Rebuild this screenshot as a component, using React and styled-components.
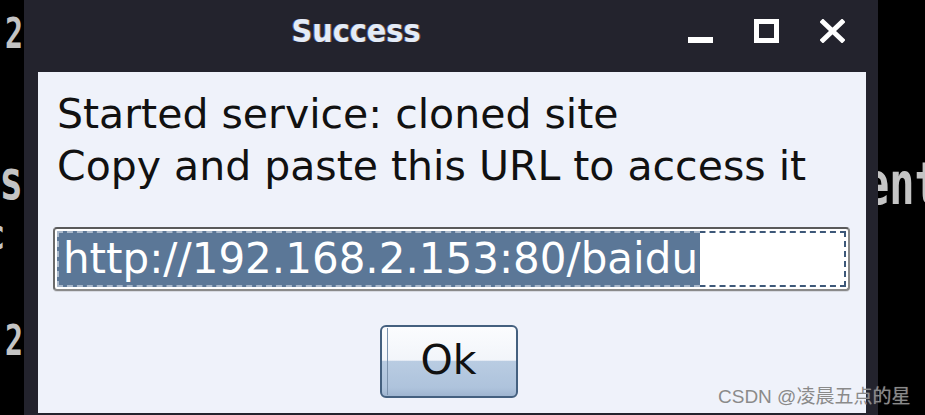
import React from 'react'
import styled, { createGlobalStyle } from 'styled-components'

const GlobalStyle = createGlobalStyle`
  html, body {
    margin: 0;
    padding: 0;
    background: #000;
  }
`

const url = 'http://192.168.2.153:80/baidu'

export default function App() {
  return (
    <Screen>
      <GlobalStyle />
      <LeftStrip>
        <TermText $size={30} $top={13}>2</TermText>
        <TermText $size={39} $top={110}>ns</TermText>
        <TermText $size={30} $top={22}>{'c\u00a0'}</TermText>
        <TermText $size={30} $top={76}>2</TermText>
      </LeftStrip>

      <Window>
        <TitleBar>
          <Title>Success</Title>
          <Controls>
            <CtlIcon viewBox="0 0 25 24">
              <rect x="0" y="18" width="25" height="6" fill="#fff" />
            </CtlIcon>
            <CtlIcon viewBox="0 0 25 24">
              <rect x="2.5" y="2.5" width="20" height="19" fill="none" stroke="#fff" strokeWidth="5" />
            </CtlIcon>
            <CtlIcon viewBox="0 0 25 24">
              <path d="M3 3 L22 21 M22 3 L3 21" stroke="#fff" strokeWidth="5" strokeLinecap="square" />
            </CtlIcon>
          </Controls>
        </TitleBar>

        <Content>
          <Message>
            Started service: cloned site
            <br />
            Copy and paste this URL to access it
          </Message>
          <Field>
            <FieldInner>
              <Selected>{url}</Selected>
            </FieldInner>
          </Field>
          <ButtonRow>
            <OkButton>Ok</OkButton>
          </ButtonRow>
        </Content>
      </Window>

      <RightStrip>
        <TermText $size={42} $top={155} $left={-14} $align="flex-start">ent</TermText>
      </RightStrip>

      <Watermark>CSDN @凌晨五点的星</Watermark>
    </Screen>
  )
}

const Screen = styled.div`
  position: relative;
  display: flex;
  width: 925px;
  height: 415px;
  overflow: hidden;
  background: #000;
`

const LeftStrip = styled.div`
  display: flex;
  flex-direction: column;
  width: 24px;
  flex: none;
  overflow: hidden;
  padding-right: 1px;
  box-sizing: border-box;
`

const RightStrip = styled.div`
  display: flex;
  flex-direction: column;
  flex: 1;
  overflow: hidden;
`

const TermText = styled.div`
  display: flex;
  justify-content: ${p => p.$align || 'flex-end'};
  margin-top: ${p => p.$top || 0}px;
  margin-left: ${p => p.$left || 0}px;
  font-family: "DejaVu Sans Mono", monospace;
  font-weight: bold;
  font-size: ${p => p.$size}px;
  line-height: ${p => p.$size}px;
  height: ${p => p.$size}px;
  color: #c4c4c4;
  white-space: pre;
  transform: scaleY(1.4);
  transform-origin: top;
`

const Window = styled.div`
  display: flex;
  flex-direction: column;
  width: 854px;
  flex: none;
  height: 415px;
  background: #23232d;
  box-sizing: border-box;
  padding: 0 12px 2px 14px;
`

const TitleBar = styled.div`
  display: flex;
  align-items: center;
  height: 72px;
  flex: none;
  padding-bottom: 10px;
  box-sizing: border-box;
  margin-left: -14px;
`

const Title = styled.div`
  flex: 1;
  text-align: center;
  font-family: "DejaVu Sans Condensed", "DejaVu Sans", sans-serif;
  font-stretch: condensed;
  font-weight: bold;
  font-size: 32px;
  color: #e4ebf6;
  text-shadow: -1px 0 0 rgba(90, 140, 255, 0.6), 1px 0 0 rgba(255, 160, 60, 0.45);
`

const Controls = styled.div`
  display: flex;
  gap: 41px;
  margin-right: 21px;
`

const CtlIcon = styled.svg`
  width: 25px;
  height: 24px;
  display: block;
`

const Content = styled.div`
  flex: 1;
  display: flex;
  flex-direction: column;
  background: #eff2fa;
  padding: 16px 16px 0 15px;
`

const Message = styled.div`
  margin-left: 4px;
  font-family: "DejaVu Sans", sans-serif;
  font-size: 41px;
  line-height: 52px;
  color: #111;
`

const Field = styled.div`
  margin-top: 35px;
  border: 2px solid #8a8a8a;
  border-top-color: #5a5a5a;
  border-left-color: #6a6a6a;
  border-radius: 4px;
  padding: 2px;
  background: #fff;
  box-shadow: 0 1px 0 #d8dbe2;
`

const FieldInner = styled.div`
  display: flex;
  height: 52px;
  border: 2px dashed #3d5879;
`

const Selected = styled.span`
  display: block;
  margin: -2px 0 -2px -2px;
  padding: 0 2px 0 4px;
  border: 2px dashed #a9b8cb;
  border-right: none;
  background: #5b7797;
  color: #fff;
  font-family: "DejaVu Sans", sans-serif;
  font-size: 42px;
  line-height: 52px;
  white-space: nowrap;
`

const ButtonRow = styled.div`
  display: flex;
  justify-content: center;
  margin-top: 34px;
  padding-right: 6px;
`

const OkButton = styled.button`
  position: relative;
  width: 138px;
  height: 73px;
  border: 2px solid #44607f;
  border-radius: 6px;
  padding: 0 0 4px;
  background: linear-gradient(
    to bottom,
    #fbfcfe 0%,
    #f2f5fa 48%,
    #b9cce2 50%,
    #aec3dc 88%,
    #9fb5d0 100%
  );
  font-family: "DejaVu Sans", sans-serif;
  font-size: 41px;
  color: #111;

  &::before {
    content: '';
    position: absolute;
    left: 5px;
    top: 1px;
    bottom: 1px;
    width: 1px;
    background: #7c93ae;
  }
`

const Watermark = styled.div`
  position: absolute;
  left: 718px;
  top: 381px;
  font-family: "Liberation Sans", "Noto Sans CJK SC", sans-serif;
  font-size: 19px;
  color: #8a8a8a;
  white-space: nowrap;
  text-shadow: 0 0 1px rgba(255, 255, 255, 0.4);
`
